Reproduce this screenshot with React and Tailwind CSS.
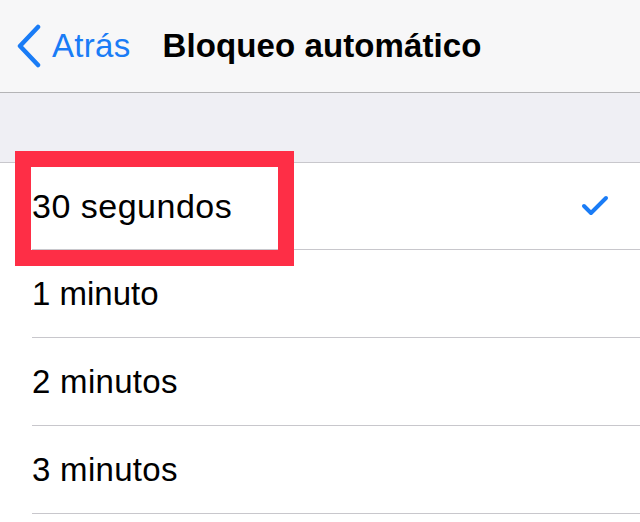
import React from "react";

function Chevron() {
  return (
    <svg width="28" height="44" viewBox="0 0 28 44" className="shrink-0">
      <path d="M23 3 L5 22 L23 41" fill="none" stroke="#1a7cf6" strokeWidth="4.5" strokeLinecap="round" strokeLinejoin="round" />
    </svg>
  );
}

function Check() {
  return (
    <svg width="28" height="24" viewBox="0 0 28 24">
      <path d="M3 12 L10 19 L25 4" fill="none" stroke="#1a7cf6" strokeWidth="4" strokeLinecap="round" strokeLinejoin="round" />
    </svg>
  );
}

const rows = [
  { label: "30 segundos", checked: true, h: "h-[87px]", t: "text-[34px] tracking-[0.5px]" },
  { label: "1 minuto", h: "h-[88px]", t: "text-[33px]" },
  { label: "2 minutos", h: "h-[88px]", t: "text-[33px] tracking-[0.3px]" },
  { label: "3 minutos", h: "h-[88px]", t: "text-[33px] tracking-[0.3px]" },
];

export default function App() {
  return (
    <div className="relative w-[640px] h-[522px] overflow-hidden bg-white font-['Liberation_Sans',Arial,sans-serif]">
      <div className="h-[93px] bg-[#f7f7f8] border-b border-[#b4b4b6] flex items-center">
        <div className="flex items-center pl-[15px] text-[#1a7cf6] text-[33px] leading-none">
          <Chevron />
          <span className="ml-[9px] mt-[-1px] tracking-[0.3px]">Atrás</span>
        </div>
        <div className="ml-[32px] mt-[-1px] text-[33px] font-bold leading-none text-black tracking-[0.1px]">
          Bloqueo automático
        </div>
      </div>
      <div className="h-[70px] bg-[#efeff4] border-b border-[#c8c7cc]" />
      {rows.map((r) => (
        <div key={r.label} className={`${r.h} pl-[32px] bg-white`}>
          <div className="h-full border-b border-[#c8c7cc] flex items-center justify-between pr-[31px]">
            <span className={`${r.t} leading-none text-black`}>{r.label}</span>
            {r.checked && <Check />}
          </div>
        </div>
      ))}
      <div className="absolute left-[15px] top-[151px] w-[279px] h-[115px] border-[16px] border-[#fe2e46]" />
    </div>
  );
}
